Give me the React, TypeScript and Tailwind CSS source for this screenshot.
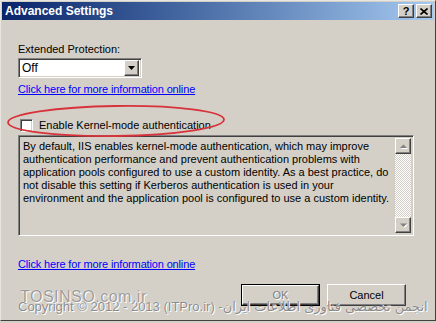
const raised =
  'border border-t-white border-l-white border-r-[#404040] border-b-[#404040] shadow-[inset_-1px_-1px_#808080,inset_1px_1px_#d4d0c8] bg-[#d4d0c8]';
const sunken =
  'border border-t-[#808080] border-l-[#808080] border-r-white border-b-white shadow-[inset_1px_1px_#404040,inset_-1px_-1px_#d4d0c8]';

const description =
  'By default, IIS enables kernel-mode authentication, which may improve authentication performance and prevent authentication problems with application pools configured to use a custom identity. As a best practice, do not disable this setting if Kerberos authentication is used in your environment and the application pool is configured to use a custom identity.';

function InfoLink() {
  return (
    <a href="#" className="block w-fit leading-[13px] tracking-[-0.15px] text-[#0000ff] underline underline-offset-1">
      Click here for more information online
    </a>
  );
}

function ScrollArrow({ up }: { up?: boolean }) {
  return (
    <div className={`${raised} flex h-[16px] w-[16px] items-center justify-center`}>
      <svg width="7" height="5" viewBox="0 0 7 5" className="drop-shadow-[1px_1px_0_#ffffff]">
        <path d={up ? 'M3.5 0.5 L7 4 L0 4 Z' : 'M0 0.5 L7 0.5 L3.5 4 Z'} fill="#808080" />
      </svg>
    </div>
  );
}

export default function App() {
  return (
    <div
      className="relative h-[323px] w-[436px] overflow-hidden bg-[#d4d0c8] text-[11px] text-black"
      style={{ fontFamily: '"Liberation Sans", Arial, sans-serif' }}
    >
      <div className="flex h-[321px] flex-col border border-t-[#e8e6e0] border-l-[#e8e6e0] border-r-[#404040] border-b-[#404040] p-[1px]">
        {/* title bar */}
        <div className="flex h-[18px] items-center justify-between bg-gradient-to-r from-[#0a246a] to-[#a6caf0] pl-[3px] pr-[2px]">
          <span className="text-[12px] font-bold text-white">Advanced Settings</span>
          <div className="flex gap-[2px]">
            <div className={`${raised} flex h-[14px] w-[16px] items-center justify-center text-[11px] font-bold leading-none`}>?</div>
            <div className={`${raised} flex h-[14px] w-[16px] items-center justify-center`}>
              <svg width="8" height="7" viewBox="0 0 8 7">
                <path d="M0.5 0.5 L7.5 6.5 M7.5 0.5 L0.5 6.5" stroke="#000" strokeWidth="1.6" />
              </svg>
            </div>
          </div>
        </div>

        <div className="flex flex-1 flex-col px-[16px] pt-[23px]">
          <p className="leading-[13px]">Extended Protection:</p>

          <div className={`${sunken} mt-[2px] flex h-[20px] w-[124px] items-center justify-between bg-white pl-[2px] pr-[2px]`}>
            <span className="pl-[1px] text-[12px]">Off</span>
            <div className={`${raised} flex h-[16px] w-[15px] items-center justify-center`}>
              <svg width="7" height="4" viewBox="0 0 7 4">
                <path d="M0 0 L7 0 L3.5 4 Z" fill="#000" />
              </svg>
            </div>
          </div>

          <div className="mt-[5px]">
            <InfoLink />
          </div>

          <label className="mt-[22px] flex h-[14px] items-center gap-[6px] pl-[2px]">
            <span className={`${sunken} block h-[13px] w-[13px] bg-white`} />
            <span className="leading-[13px]">Enable Kernel-mode authentication</span>
          </label>

          <div className={`${sunken} mt-[3px] flex h-[101px] w-[396px] bg-[#d4d0c8] p-[2px]`}>
            <p className="flex-1 pl-[2px] pr-[4px] pt-[2px] leading-[13px]">{description}</p>
            <div className="flex w-[16px] flex-col justify-between bg-[repeating-conic-gradient(#d4d0c8_0%_25%,#ffffff_0%_50%)] bg-[length:2px_2px]">
              <ScrollArrow up />
              <ScrollArrow />
            </div>
          </div>

          <div className="mt-[22px]">
            <InfoLink />
          </div>

          <div className="mt-[13px] flex justify-end gap-[7px] pr-[12px]">
            <button className="h-[22px] w-[79px] border border-black">
              <div className={`${raised} flex h-full w-full items-center justify-center text-[#808080] [text-shadow:1px_1px_0_#ffffff]`}>
                OK
              </div>
            </button>
            <button className={`${raised} h-[22px] w-[79px]`}>Cancel</button>
          </div>
        </div>
      </div>

      {/* red highlight */}
      <svg className="pointer-events-none absolute left-0 top-0" width="436" height="323">
        <ellipse cx="116" cy="121" rx="108" ry="15" fill="none" stroke="#d8323a" strokeWidth="1.8" transform="rotate(-0.8 116 121)" />
      </svg>

      {/* watermark */}
      <div className="pointer-events-none absolute left-[18px] top-[297px] flex items-baseline whitespace-nowrap text-[13px] text-[#8a8a8a] [text-shadow:0_0_1px_#ffffff,1px_1px_0_#ffffff]">
        <span>Copyright © 2012 - 2013 (ITPro.ir) - </span>
        <span className="text-[13px]" style={{ fontFamily: '"DejaVu Sans", sans-serif' }} dir="rtl">
          انجمن تخصصی فناوری اطلاعات ایران
        </span>
      </div>
      <div className="pointer-events-none absolute left-[20px] top-[285px] text-[16px] tracking-[0.5px] text-[#9a9a9a] [text-shadow:0_0_1px_#ffffff,1px_1px_0_#ffffff]">
        TOSINSO.com.ir
      </div>
    </div>
  );
}
